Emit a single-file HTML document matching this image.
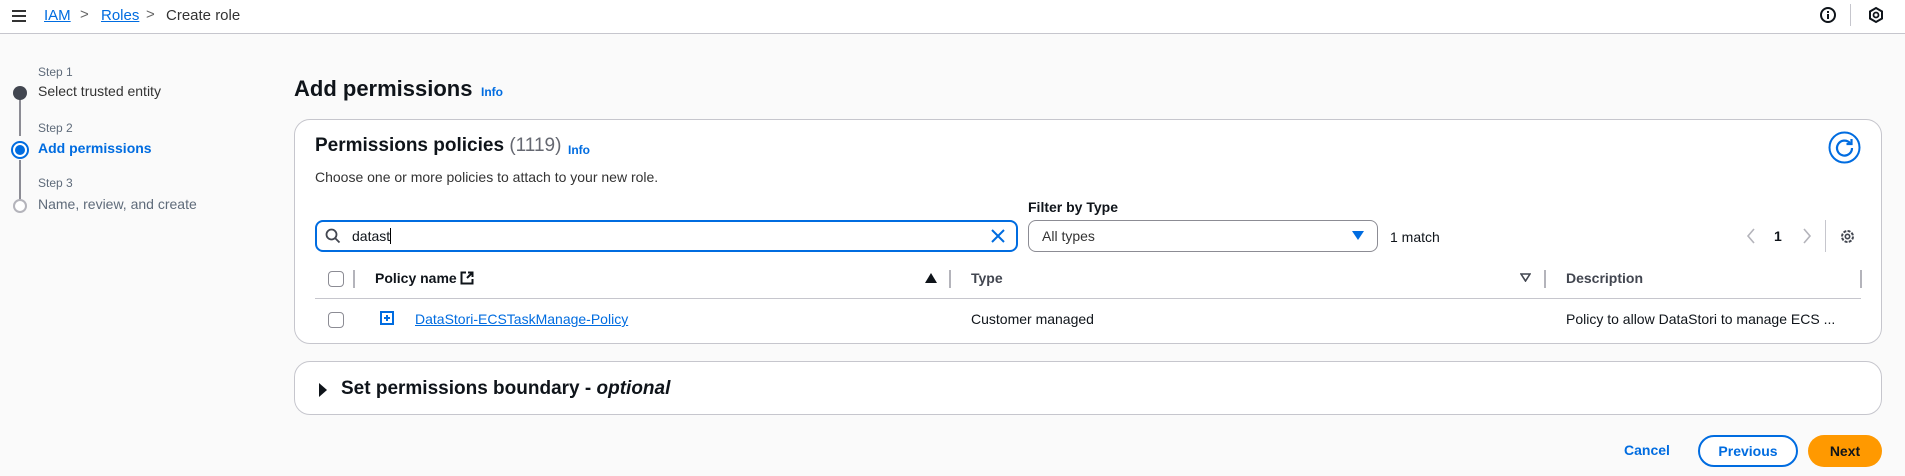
<!DOCTYPE html>
<html><head><meta charset="utf-8"><style>
*{box-sizing:border-box;margin:0;padding:0}
body{width:1905px;height:476px;overflow:hidden;background:#fafafa;font-family:"Liberation Sans",sans-serif;color:#0f141a;font-size:14px;position:relative}
.a{position:absolute;white-space:nowrap}
.blue{color:#006ce0}
.hdr{position:absolute;left:0;top:0;width:1905px;height:34px;background:#fff;border-bottom:1px solid #c6c6cd}
.card{position:absolute;background:#fff;border:1px solid #c6c6cd;border-radius:16px}
.cb{position:absolute;width:16px;height:16px;border:1.5px solid #8c8c94;border-radius:4px;background:#fff}
.vd{position:absolute;width:2px;height:18px;background:#b4b4bb}
.bold{font-weight:bold}
</style></head><body>
<div class="hdr"></div>
<div class="a" style="left:12px;top:10px;width:14px;height:2px;background:#333;box-shadow:0 5px 0 #333,0 10px 0 #333"></div>
<div class="a blue" style="left:44px;top:7px;font-size:15px;text-decoration:underline">IAM</div>
<div class="a" style="left:80px;top:6px;font-size:15px;color:#666">&gt;</div>
<div class="a blue" style="left:101px;top:7px;font-size:15px;text-decoration:underline">Roles</div>
<div class="a" style="left:146px;top:6px;font-size:15px;color:#666">&gt;</div>
<div class="a" style="left:166px;top:7px;font-size:15px;color:#333">Create role</div>
<svg class="a" style="left:1819px;top:6px" width="18" height="18" viewBox="0 0 18 18"><circle cx="9" cy="9" r="7" fill="none" stroke="#0f141a" stroke-width="2"/><rect x="8" y="8" width="2" height="5" fill="#0f141a"/><rect x="8" y="5" width="2" height="2" fill="#0f141a"/></svg>
<div class="a" style="left:1850px;top:4px;width:1px;height:22px;background:#c6c6cd"></div>
<svg class="a" style="left:1867px;top:6px" width="18" height="18" viewBox="0 0 18 18"><path d="M9 2 L15 5.5 L15 12.5 L9 16 L3 12.5 L3 5.5 Z" fill="none" stroke="#0f141a" stroke-width="2"/><circle cx="9" cy="9" r="2.5" fill="none" stroke="#0f141a" stroke-width="1.8"/></svg>

<!-- steps -->
<div class="a" style="left:19px;top:98px;width:2px;height:38px;background:#8c8c94"></div>
<div class="a" style="left:19px;top:160px;width:2px;height:40px;background:#8c8c94"></div>
<div class="a" style="left:38px;top:65px;font-size:12px;color:#5f6b7a">Step 1</div>
<div class="a" style="left:13px;top:86px;width:14px;height:14px;border-radius:50%;background:#424650"></div>
<div class="a" style="left:38px;top:83px;color:#333">Select trusted entity</div>
<div class="a" style="left:38px;top:121px;font-size:12px;color:#5f6b7a">Step 2</div>
<div class="a" style="left:11px;top:141px;width:18px;height:18px;border-radius:50%;border:2px solid #006ce0;background:#fff"></div>
<div class="a" style="left:15px;top:145px;width:10px;height:10px;border-radius:50%;background:#006ce0"></div>
<div class="a blue bold" style="left:38px;top:140px">Add permissions</div>
<div class="a" style="left:38px;top:176px;font-size:12px;color:#5f6b7a">Step 3</div>
<div class="a" style="left:13px;top:199px;width:14px;height:14px;border-radius:50%;border:2px solid #b4b4bb;background:#fff"></div>
<div class="a" style="left:38px;top:196px;color:#5f6b7a">Name, review, and create</div>

<div class="a bold" style="left:294px;top:76px;font-size:22px">Add permissions</div>
<div class="a blue bold" style="left:481px;top:85px;font-size:12px">Info</div>

<div class="card" style="left:294px;top:119px;width:1588px;height:225px"></div>
<div class="a" style="left:315px;top:135px;font-size:19px"><b>Permissions policies</b> <span style="color:#656871">(1119)</span></div>
<div class="a blue bold" style="left:568px;top:143px;font-size:12px">Info</div>
<div class="a" style="left:315px;top:169px;color:#333">Choose one or more policies to attach to your new role.</div>
<svg class="a" style="left:1828px;top:131px" width="33" height="33" viewBox="0 0 33 33"><circle cx="16.5" cy="16.5" r="15" fill="#fff" stroke="#006ce0" stroke-width="2"/><path d="M22 12 A7.5 7.5 0 1 0 24 17" fill="none" stroke="#006ce0" stroke-width="2.2"/><path d="M23.5 8 L23.5 13 L18.5 13" fill="none" stroke="#006ce0" stroke-width="2.2"/></svg>

<div class="a bold" style="left:1028px;top:199px;font-size:14px">Filter by Type</div>
<div class="a" style="left:315px;top:220px;width:703px;height:32px;border:2px solid #006ce0;border-radius:8px;background:#fff"></div>
<svg class="a" style="left:325px;top:228px" width="16" height="16" viewBox="0 0 16 16"><circle cx="6.5" cy="6.5" r="5" fill="none" stroke="#424650" stroke-width="1.8"/><path d="M10 10 L14.5 14.5" stroke="#424650" stroke-width="1.8"/></svg>
<div class="a" style="left:352px;top:228px">datast<span style="border-left:1px solid #000;margin-left:0"></span></div>
<svg class="a" style="left:991px;top:229px" width="14" height="14" viewBox="0 0 14 14"><path d="M1 1 L13 13 M13 1 L1 13" stroke="#006ce0" stroke-width="2"/></svg>
<div class="a" style="left:1028px;top:220px;width:350px;height:32px;border:1px solid #8c8c94;border-radius:8px;background:#fff"></div>
<div class="a" style="left:1042px;top:228px;color:#333">All types</div>
<svg class="a" style="left:1352px;top:231px" width="12" height="10" viewBox="0 0 12 10"><path d="M0 0 H12 L6 9 Z" fill="#006ce0"/></svg>
<div class="a" style="left:1390px;top:229px">1 match</div>
<svg class="a" style="left:1746px;top:228px" width="10" height="16" viewBox="0 0 10 16"><path d="M8 1 L2 8 L8 15" fill="none" stroke="#b4b4bb" stroke-width="1.6"/></svg>
<div class="a bold" style="left:1774px;top:228px">1</div>
<svg class="a" style="left:1802px;top:228px" width="10" height="16" viewBox="0 0 10 16"><path d="M2 1 L8 8 L2 15" fill="none" stroke="#b4b4bb" stroke-width="1.6"/></svg>
<div class="a" style="left:1825px;top:220px;width:1px;height:32px;background:#c6c6cd"></div>
<svg class="a" style="left:1839px;top:228px" width="17" height="17" viewBox="0 0 17 17"><circle cx="8.5" cy="8.5" r="5.5" fill="none" stroke="#424650" stroke-width="2" stroke-dasharray="3 1.3"/><circle cx="8.5" cy="8.5" r="2.2" fill="none" stroke="#424650" stroke-width="1.6"/></svg>

<!-- table -->
<div class="cb" style="left:328px;top:271px"></div>
<div class="vd" style="left:353px;top:270px"></div>
<div class="a bold" style="left:375px;top:270px">Policy name</div>
<svg class="a" style="left:460px;top:271px" width="14" height="14" viewBox="0 0 14 14"><path d="M6 1.5 H1.5 V12.5 H12.5 V8" fill="none" stroke="#0f141a" stroke-width="2"/><path d="M7 7 L12.5 1.5 M8 1.5 H12.5 V6" fill="none" stroke="#0f141a" stroke-width="2"/></svg>
<svg class="a" style="left:925px;top:273px" width="12" height="10" viewBox="0 0 12 10"><path d="M0 10 H12 L6 0 Z" fill="#0f141a"/></svg>
<div class="vd" style="left:949px;top:270px"></div>
<div class="a bold" style="left:971px;top:270px;color:#424650">Type</div>
<svg class="a" style="left:1520px;top:273px" width="11" height="9" viewBox="0 0 11 9"><path d="M1 1 H10 L5.5 8 Z" fill="none" stroke="#424650" stroke-width="1.6"/></svg>
<div class="vd" style="left:1544px;top:270px"></div>
<div class="a bold" style="left:1566px;top:270px;color:#424650">Description</div>
<div class="vd" style="left:1860px;top:270px"></div>
<div class="a" style="left:315px;top:298px;width:1546px;height:1px;background:#c6c6cd"></div>
<div class="cb" style="left:328px;top:312px"></div>
<svg class="a" style="left:380px;top:311px" width="14" height="14" viewBox="0 0 14 14"><rect x="1" y="1" width="12" height="12" fill="none" stroke="#006ce0" stroke-width="2"/><path d="M7 4 V10 M4 7 H10" stroke="#006ce0" stroke-width="2"/></svg>
<div class="a blue" style="left:415px;top:311px;text-decoration:underline">DataStori-ECSTaskManage-Policy</div>
<div class="a" style="left:971px;top:311px">Customer managed</div>
<div class="a" style="left:1566px;top:311px">Policy to allow DataStori to manage ECS ...</div>

<div class="card" style="left:294px;top:361px;width:1588px;height:54px"></div>
<svg class="a" style="left:318px;top:383px" width="10" height="14" viewBox="0 0 10 14"><path d="M1 0 L9 7 L1 14 Z" fill="#0f141a"/></svg>
<div class="a bold" style="left:341px;top:378px;font-size:19px">Set permissions boundary - <i>optional</i></div>

<div class="a blue bold" style="left:1624px;top:442px">Cancel</div>
<div class="a blue bold" style="left:1698px;top:435px;width:100px;height:32px;border:2px solid #006ce0;border-radius:16px;text-align:center;line-height:28px;background:#fff">Previous</div>
<div class="a bold" style="left:1808px;top:435px;width:74px;height:32px;border-radius:16px;background:#ff9900;text-align:center;line-height:32px">Next</div>
</body></html>
